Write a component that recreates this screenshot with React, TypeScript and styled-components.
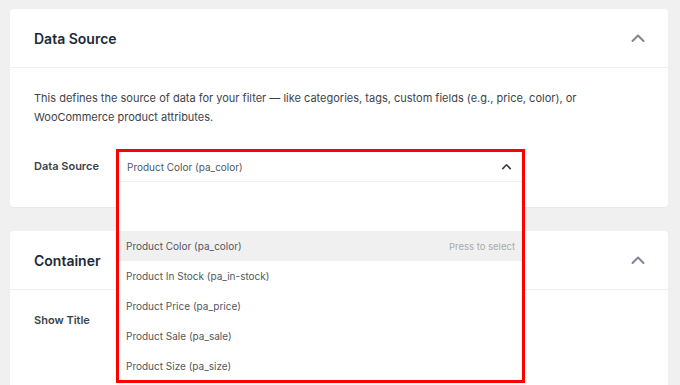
import React from "react";
import styled, { createGlobalStyle } from "styled-components";

const GlobalStyle = createGlobalStyle`
  * { box-sizing: border-box; }
  body {
    margin: 0;
    background: #f0f0f1;
    font-family: Inter, "Noto Sans", sans-serif;
    color: #1d2327;
    overflow: hidden;
  }
`;

const Page = styled.div`
  padding: 9px 12px 0 10px;
  display: flex;
  flex-direction: column;
  gap: 24px;
  height: 400px;
`;

const Card = styled.section<{ $grow?: boolean }>`
  background: #fff;
  border-radius: 4px;
  box-shadow: 0 1px 1px rgba(0, 0, 0, 0.03);
  flex: ${(p) => (p.$grow ? "1" : "none")};
`;

const CardHeader = styled.div`
  height: 59px;
  display: flex;
  align-items: center;
  justify-content: space-between;
  padding: 0 22px 0 24px;
  border-bottom: 1px solid #f0f0f1;
`;

const CardTitle = styled.h2`
  margin: 0;
  font-size: 14px;
  font-weight: 600;
  color: #1e2a38;
`;

const CardBody = styled.div<{ $top?: number }>`
  padding: ${(p) => p.$top ?? 21}px 24px 24px;
  display: flex;
  flex-direction: column;
  gap: 22px;
`;

const Description = styled.p`
  margin: 0;
  font-size: 11px;
  line-height: 19px;
  color: #3c434a;
  max-width: 580px;
`;

const FieldRow = styled.div`
  display: flex;
  align-items: center;
`;

const FieldLabel = styled.span`
  width: 82px;
  flex-shrink: 0;
  font-size: 11px;
  font-weight: 600;
  color: #3c434a;
`;

const SelectSlot = styled.div`
  position: relative;
  width: 409px;
  height: 34px;
`;

const DropPanel = styled.div`
  position: absolute;
  top: 0;
  left: 0;
  right: 0;
  z-index: 10;
  background: #fff;
  border: 3px solid #ff0000;
  display: flex;
  flex-direction: column;
`;

const SelectHead = styled.div`
  height: 30px;
  display: flex;
  align-items: center;
  justify-content: space-between;
  padding: 0 10px 0 8px;
  border-bottom: 1px solid #f0f0f1;
  font-size: 10px;
  color: #50575e;
`;

const SearchArea = styled.div`
  height: 49px;
`;

const OptionList = styled.ul`
  list-style: none;
  margin: 0;
  padding: 0;
  height: 149px;
  overflow: hidden;
`;

const Option = styled.li<{ $active?: boolean }>`
  height: 30px;
  display: flex;
  align-items: center;
  justify-content: space-between;
  padding: 0 7px;
  font-size: 10px;
  color: #50575e;
  background: ${(p) => (p.$active ? "#f0f0f1" : "#fff")};
`;

const Hint = styled.span`
  font-size: 9.5px;
  color: #a7aaad;
`;

const Chevron: React.FC<{ size?: number; color?: string; stroke?: number }> = ({
  size = 16,
  color = "#7b8794",
  stroke = 2,
}) => (
  <svg width={size} height={size} viewBox="0 0 16 16" fill="none">
    <path
      d="M2.5 11 L8 5.5 L13.5 11"
      stroke={color}
      strokeWidth={stroke}
      strokeLinecap="round"
      strokeLinejoin="round"
    />
  </svg>
);

const options = [
  "Product Color (pa_color)",
  "Product In Stock (pa_in-stock)",
  "Product Price (pa_price)",
  "Product Sale (pa_sale)",
  "Product Size (pa_size)",
];

const App: React.FC = () => {
  return (
    <>
      <GlobalStyle />
      <Page>
        <Card>
          <CardHeader>
            <CardTitle>Data Source</CardTitle>
            <Chevron />
          </CardHeader>
          <CardBody>
            <Description>
              This defines the source of data for your filter — like categories, tags,
              custom fields (e.g., price, color), or WooCommerce product attributes.
            </Description>
            <FieldRow>
              <FieldLabel>Data Source</FieldLabel>
              <SelectSlot>
                <DropPanel>
                  <SelectHead>
                    Product Color (pa_color)
                    <Chevron size={11} color="#3c434a" stroke={2.4} />
                  </SelectHead>
                  <SearchArea />
                  <OptionList>
                    {options.map((o, i) => (
                      <Option key={o} $active={i === 0}>
                        {o}
                        {i === 0 && <Hint>Press to select</Hint>}
                      </Option>
                    ))}
                  </OptionList>
                </DropPanel>
              </SelectSlot>
            </FieldRow>
          </CardBody>
        </Card>
        <Card $grow>
          <CardHeader>
            <CardTitle>Container</CardTitle>
            <Chevron />
          </CardHeader>
          <CardBody $top={23}>
            <FieldRow>
              <FieldLabel>Show Title</FieldLabel>
            </FieldRow>
          </CardBody>
        </Card>
      </Page>
    </>
  );
};

export default App;
